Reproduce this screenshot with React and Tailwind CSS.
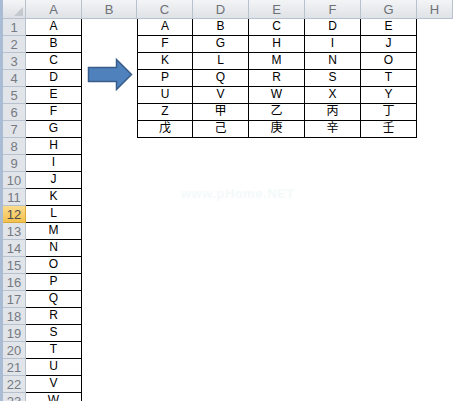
const cols = ['A', 'B', 'C', 'D', 'E', 'F', 'G', 'H']
const colA = 'ABCDEFGHIJKLMNOPQRSTUVW'.split('')
const block = [
  ['A', 'B', 'C', 'D', 'E'],
  ['F', 'G', 'H', 'I', 'J'],
  ['K', 'L', 'M', 'N', 'O'],
  ['P', 'Q', 'R', 'S', 'T'],
  ['U', 'V', 'W', 'X', 'Y'],
  ['Z', '甲', '乙', '丙', '丁'],
  ['戊', '己', '庚', '辛', '壬'],
]

function Arrow() {
  return (
    <svg width="46" height="33" viewBox="0 0 46 33" className="block">
      <path d="M1.5 9.5 H29.5 V1.5 L44.5 16.5 L29.5 31.5 V23.5 H1.5 Z" fill="#4f81bd" stroke="#385d8a" strokeWidth="1.5" />
    </svg>
  )
}

export default function App() {
  const rows = colA.map((a, i) => i + 1)

  return (
    <div
      className="relative h-[401px] w-[453px] overflow-hidden border-l-[3px] border-[#a9bcd3] bg-white text-[12px] text-black"
      style={{ fontFamily: '"Liberation Sans", Arial, "Noto Sans CJK SC", sans-serif' }}
    >
      <div className="grid grid-cols-[23px_56px_55px_56px_56px_56px_56px_56px_1fr] grid-rows-[19px] auto-rows-[17px]">
        {/* header row */}
        <div className="relative border-b border-r border-[#b8c2ce] bg-gradient-to-b from-[#f4f5f7] to-[#dcdfe4]">
          <svg className="absolute bottom-[2px] right-[2px]" width="9" height="9" viewBox="0 0 9 9">
            <path d="M9 0 V9 H0 Z" fill="#c4c9d0" />
          </svg>
        </div>
        {cols.map((c) => (
          <div
            key={c}
            className="flex items-center justify-center border-b border-r border-[#b8c2ce] bg-gradient-to-b from-[#f3f4f6] to-[#dfe2e6] pt-[1px] text-[13px] text-[#6d7178]"
          >
            {c}
          </div>
        ))}

        {rows.map((r) => {
          const inBlock = r <= 7
          const selected = r === 12
          return [
            <div
              key={`h${r}`}
              className={`flex items-center justify-center border-b border-r pt-[1px] text-[13px] ${
                selected
                  ? 'border-[#d9a93a] bg-gradient-to-b from-[#fbdc8c] to-[#f3c04d] text-[#4b4b4b]'
                  : 'border-[#b8c2ce] bg-[#e1e4e9] text-[#757a82]'
              }`}
            >
              {r}
            </div>,
            <div key={`a${r}`} className="flex items-end justify-center border-b border-r border-black pb-[1px] leading-[15px]">
              {colA[r - 1]}
            </div>,
            <div key={`b${r}`} className="relative">
              {r === 4 && (
                <div className="absolute left-[5px] top-[-12px]">
                  <Arrow />
                </div>
              )}
            </div>,
            ...[0, 1, 2, 3, 4].map((j) =>
              inBlock ? (
                <div
                  key={`c${r}${j}`}
                  className={`flex items-end justify-center border-b border-r border-black pb-[1px] leading-[15px] ${
                    j === 0 ? 'border-l' : ''
                  }`}
                >
                  {block[r - 1][j]}
                </div>
              ) : (
                <div key={`c${r}${j}`} />
              )
            ),
            <div key={`h2${r}`} />,
          ]
        })}
      </div>

      {/* faint watermark */}
      <div className="pointer-events-none absolute left-[178px] top-[184px] text-[13px] font-bold tracking-[0.5px] text-[#f4fafa]">
        www.pHome.NET
      </div>
    </div>
  )
}
